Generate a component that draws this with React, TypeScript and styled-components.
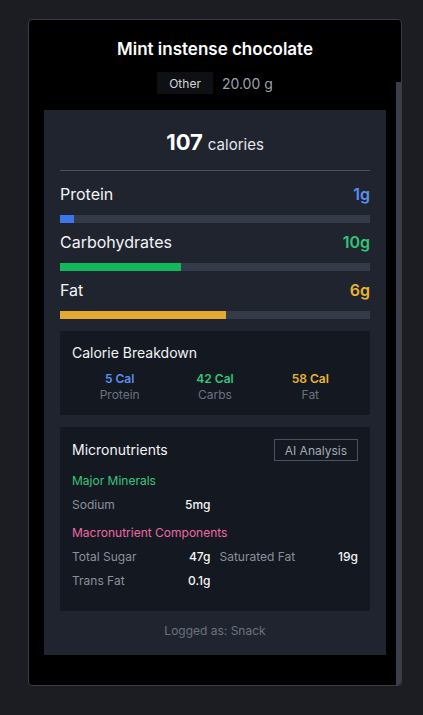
import React from "react";
import styled, { createGlobalStyle } from "styled-components";

const Global = createGlobalStyle`
  html, body { margin: 0; padding: 0; background: #1c1c23; }
  body { font-family: Inter, "Noto Sans", sans-serif; -webkit-font-smoothing: antialiased; }
  * { box-sizing: border-box; }
`;

const Page = styled.div`
  min-height: 715px;
  padding: 19px 0 0 28px;
`;

const Modal = styled.div`
  position: relative;
  width: 374px;
  height: 667px;
  background: #000;
  border: 1px solid #3a3c44;
  border-radius: 4px;
  overflow: hidden;
`;

const ScrollThumb = styled.div`
  position: absolute;
  right: 0;
  top: 62px;
  bottom: 0;
  width: 5px;
  background: #3a3e48;
`;

const Header = styled.div`
  padding: 15px 15px 16px;
  display: flex;
  flex-direction: column;
  align-items: center;
  gap: 9px;
`;

const Title = styled.h1`
  margin: 0;
  font-size: 17px;
  line-height: 28px;
  font-weight: 600;
  color: #ffffff;
`;

const MetaRow = styled.div`
  display: flex;
  align-items: center;
  gap: 9px;
`;

const Tag = styled.span`
  display: inline-flex;
  align-items: center;
  height: 22px;
  padding: 0 12px;
  background: #0e1014;
  color: #d1d5db;
  font-size: 12px;
`;

const Weight = styled.span`
  color: #9ca3af;
  font-size: 14px;
`;

const Panel = styled.div`
  margin: 0 15px;
  background: #1f242e;
  padding: 15px 16px 16px;
  display: flex;
  flex-direction: column;
`;

const Calories = styled.div`
  text-align: center;
  line-height: 34px;
  color: #fff;
  padding-bottom: 8px;
  border-bottom: 1px solid #4b5160;
`;

const CalNum = styled.span`
  font-size: 22px;
  font-weight: 700;
`;

const CalUnit = styled.span`
  font-size: 15px;
  color: #e5e7eb;
  margin-left: 5px;
`;

const Macros = styled.div`
  padding-top: 11px;
  display: flex;
  flex-direction: column;
  gap: 7px;
`;

const MacroRow = styled.div`
  display: flex;
  flex-direction: column;
  gap: 9px;
`;

const MacroHead = styled.div`
  display: flex;
  justify-content: space-between;
  font-size: 16px;
  line-height: 24px;
  color: #f3f4f6;
`;

const MacroValue = styled.span<{ $c: string }>`
  color: ${(p) => p.$c};
  font-weight: 600;
`;

const Track = styled.div`
  height: 8px;
  background: #343a47;
`;

const Fill = styled.div<{ $c: string }>`
  height: 100%;
  background: ${(p) => p.$c};
`;

const Card = styled.div<{ $pb?: number }>`
  background: #141820;
  padding: 12px 12px ${(p) => p.$pb ?? 12}px;
  margin-top: 12px;
`;

const CardTitle = styled.div`
  font-size: 14px;
  line-height: 20px;
  color: #f3f4f6;
`;

const BreakGrid = styled.div`
  display: grid;
  grid-template-columns: repeat(3, 1fr);
  margin-top: 8px;
  text-align: center;
`;

const BreakValue = styled.div<{ $c: string }>`
  color: ${(p) => p.$c};
  font-size: 12px;
  line-height: 16px;
  font-weight: 600;
`;

const BreakLabel = styled.div`
  color: #6b7280;
  font-size: 12px;
  line-height: 16px;
`;

const MicroHead = styled.div`
  display: flex;
  justify-content: space-between;
  align-items: center;
`;

const AIButton = styled.button`
  height: 22px;
  padding: 0 10px;
  background: transparent;
  border: 1px solid #4b5160;
  color: #a3a9b4;
  font-family: inherit;
  font-size: 12px;
`;

const SectionTitle = styled.div<{ $c: string }>`
  color: ${(p) => p.$c};
  font-size: 12px;
  line-height: 16px;
  margin-top: 12px;
`;

const NutGrid = styled.div`
  display: grid;
  grid-template-columns: 1fr 1fr;
  column-gap: 9px;
  row-gap: 8px;
  margin-top: 8px;
`;

const NutCell = styled.div`
  display: flex;
  justify-content: space-between;
  font-size: 12px;
  line-height: 16px;
`;

const NutName = styled.span`
  color: #8b919c;
`;

const NutValue = styled.span`
  color: #f3f4f6;
  font-weight: 500;
`;

const Logged = styled.div`
  margin-top: 12px;
  text-align: center;
  color: #6b7280;
  font-size: 12px;
  line-height: 16px;
`;

const macros = [
  { name: "Protein", value: "1g", color: "#5b8fef", bar: "#3b76ea", pct: 4.5 },
  { name: "Carbohydrates", value: "10g", color: "#33c47a", bar: "#12b95c", pct: 38.9 },
  { name: "Fat", value: "6g", color: "#eab52f", bar: "#e3a930", pct: 53.7 },
];

export default function App() {
  return (
    <>
      <Global />
      <Page>
        <Modal>
          <Header>
            <Title>Mint instense chocolate</Title>
            <MetaRow>
              <Tag>Other</Tag>
              <Weight>20.00 g</Weight>
            </MetaRow>
          </Header>
          <Panel>
            <Calories>
              <CalNum>107</CalNum>
              <CalUnit>calories</CalUnit>
            </Calories>
            <Macros>
              {macros.map((m) => (
                <MacroRow key={m.name}>
                  <MacroHead>
                    <span>{m.name}</span>
                    <MacroValue $c={m.color}>{m.value}</MacroValue>
                  </MacroHead>
                  <Track>
                    <Fill $c={m.bar} style={{ width: `${m.pct}%` }} />
                  </Track>
                </MacroRow>
              ))}
            </Macros>
            <Card>
              <CardTitle>Calorie Breakdown</CardTitle>
              <BreakGrid>
                <div>
                  <BreakValue $c="#5b8fef">5 Cal</BreakValue>
                  <BreakLabel>Protein</BreakLabel>
                </div>
                <div>
                  <BreakValue $c="#33c47a">42 Cal</BreakValue>
                  <BreakLabel>Carbs</BreakLabel>
                </div>
                <div>
                  <BreakValue $c="#eab52f">58 Cal</BreakValue>
                  <BreakLabel>Fat</BreakLabel>
                </div>
              </BreakGrid>
            </Card>
            <Card $pb={22}>
              <MicroHead>
                <CardTitle>Micronutrients</CardTitle>
                <AIButton>AI Analysis</AIButton>
              </MicroHead>
              <SectionTitle $c="#34c77b">Major Minerals</SectionTitle>
              <NutGrid>
                <NutCell>
                  <NutName>Sodium</NutName>
                  <NutValue>5mg</NutValue>
                </NutCell>
              </NutGrid>
              <SectionTitle $c="#ec6aa5">Macronutrient Components</SectionTitle>
              <NutGrid>
                <NutCell>
                  <NutName>Total Sugar</NutName>
                  <NutValue>47g</NutValue>
                </NutCell>
                <NutCell>
                  <NutName>Saturated Fat</NutName>
                  <NutValue>19g</NutValue>
                </NutCell>
                <NutCell>
                  <NutName>Trans Fat</NutName>
                  <NutValue>0.1g</NutValue>
                </NutCell>
              </NutGrid>
            </Card>
            <Logged>Logged as: Snack</Logged>
          </Panel>
          <ScrollThumb />
        </Modal>
      </Page>
    </>
  );
}
